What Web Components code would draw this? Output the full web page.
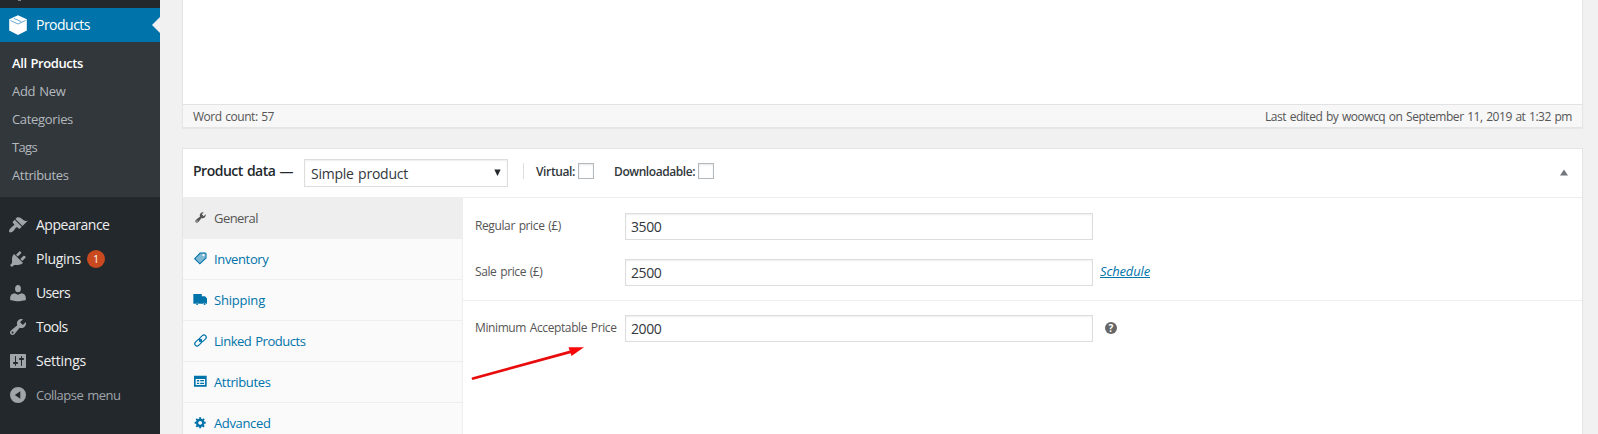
<!DOCTYPE html>
<html lang="en"><head><meta charset="utf-8"><title>Edit product</title>
<style>
html,body{margin:0;height:434px;overflow:hidden;background:#f1f1f1}
body{font-family:"Open Sans","Noto Sans",sans-serif;font-size:13px;color:#444}
</style></head><body>
<admin-page></admin-page>
<script>
const define=(name,html,after)=>customElements.define(name,class extends HTMLElement{
  connectedCallback(){
    if(this.shadowRoot)return;
    this.attachShadow({mode:'open'}).innerHTML=typeof html==='function'?html(this):html;
    if(after)after(this);
  }
});

/* A single line of text tracked to a given width. */
define('fit-text','<style>:host{display:inline-block;white-space:pre;flex:none;line-height:18px;word-spacing:1px}span{display:inline-block;text-decoration:inherit}</style><span><slot></slot></span>',el=>{
  const w=+el.getAttribute('w');
  if(!w)return;
  const s=el.shadowRoot.querySelector('span');
  const n=el.textContent.length;
  s.style.letterSpacing=((w-s.getBoundingClientRect().width)/n).toFixed(3)+'px';
});

const icons={
 product:'<path fill="#fff" d="M10 .3 18.8 4.2V15.4L10 20 1.2 15.4V4.2z"/><path fill="none" stroke="#0073aa" stroke-width=".6" d="M2.4 5.5 10 9 17.6 5.5M6 3.400 13.200 6.700"/>',
 appearance:'<path d="M14.48 11.06L7.41 3.99l1.5-1.5c.5-.56 2.3-.47 3.51.32 1.21.8 1.43 1.28 2.91 2.1 1.18.64 2.45 1.26 4.45.85zm-.71.71L6.7 4.7 4.93 6.47c-.39.39-.39 1.02 0 1.41l1.06 1.06c.39.39.39 1.03 0 1.42-.6.6-1.43 1.11-2.21 1.69-.35.26-.7.53-1.01.84C1.43 14.23.4 16.08 1.4 17.07c.99 1 2.84-.03 4.18-1.36.31-.31.58-.66.85-1.02.57-.78 1.08-1.61 1.69-2.21.39-.39 1.02-.39 1.41 0l1.06 1.06c.39.39 1.02.39 1.41 0z"/>',
 plugins:'<path d="M13.11 4.36L9.87 7.6 8 5.73l3.24-3.24c.35-.34 1.05-.2 1.56.32.52.51.66 1.21.31 1.55zm-8 1.77l.91-1.12 9.01 9.01-1.19.84c-.71.71-2.63 1.16-3.82 1.16H6.14L4.9 17.26c-.59.59-1.54.59-2.12 0-.59-.58-.59-1.53 0-2.12l1.24-1.24v-3.88c0-1.13.4-3.19 1.09-3.89zm7.26 3.97l3.24-3.24c.34-.35 1.04-.21 1.55.31.52.51.66 1.21.31 1.55l-3.24 3.25z"/>',
 users:'<path d="M10 9.250c-2.270 0-2.950-2-2.950-3.600C7.050 3.600 8.200 2 10 2s2.950 1.600 2.950 3.650C12.950 7.250 12.270 9.250 10 9.250zM6.600 10.200 10 11.700l3.400-1.500c2.600.2 4.400 2 4.400 4.400v2.400s-3.800 1.200-7.800 1.200S2.200 17 2.200 17v-2.400c0-2.400 1.800-4.200 4.400-4.400z"/>',
 tools:'<path d="M16.68 9.77c-1.34 1.34-3.3 1.67-4.95.99l-5.41 6.52c-.99.99-2.59.99-3.58 0s-.99-2.59 0-3.57l6.52-5.42c-.68-1.65-.35-3.61.99-4.95 1.28-1.28 3.12-1.62 4.72-1.06l-2.89 2.89 2.82 2.82 2.86-2.87c.53 1.58.18 3.39-1.08 4.65zM3.81 16.21c.4.39 1.04.39 1.43 0 .4-.4.4-1.04 0-1.43-.39-.4-1.03-.4-1.43 0-.39.39-.39 1.03 0 1.43z"/>',
 settings:'<path d="M18 16V4c0-.55-.45-1-1-1H3c-.55 0-1 .45-1 1v12c0 .55.45 1 1 1h14c.55 0 1-.45 1-1zM8 11h1c.55 0 1 .45 1 1s-.45 1-1 1H8v1.5c0 .28-.22.5-.5.5s-.5-.22-.5-.5V13H6c-.55 0-1-.45-1-1s.45-1 1-1h1V5.500c0-.28.22-.5.5-.5s.5.22.5.5V11zm5-2h-1c-.55 0-1-.45-1-1s.45-1 1-1h1V5.500c0-.28.22-.5.5-.5s.5.22.5.5V7h1c.55 0 1 .45 1 1s-.45 1-1 1h-1v5.500c0 .28-.22.5-.5.5s-.5-.22-.5-.5V9z"/>',
 collapse:'<path fill-rule="evenodd" d="M10 2a8 8 0 1 0 0 16 8 8 0 0 0 0-16zM12.300 6.300v7.400L6.800 10z"/>',
 inventory:'<path fill-rule="evenodd" d="M10 1h8v8L9 18.500.8 10.200zM14.600 3a1.800 1.800 0 1 0 0 3.600 1.800 1.800 0 0 0 0-3.600z" opacity=".5"/><path fill="none" stroke="currentColor" stroke-width="1.600" d="M9.500 1.600h7.500l1.500 1v6.500L9 18.200 1 10.200z"/>',
 shipping:'<path d="M-1 1.500h13V5H17l3 3.500v8h-1.500a2.300 2.300 0 0 0-4.400 0H7a2.300 2.300 0 0 0-4.400 0H-1z"/><circle cx="4.800" cy="17" r="1.600"/><circle cx="16.300" cy="17" r="1.600"/>',
 linked:'<g fill="none" stroke="currentColor" stroke-width="1.800"><rect x="7.500" y="3.300" width="12" height="7" rx="3.500" transform="rotate(-45 13.500 6.800)"/><rect x=".5" y="9.800" width="12" height="7" rx="3.500" transform="rotate(-45 6.500 13.300)"/></g><path stroke="currentColor" stroke-width="1.200" d="m7.500 12.500 5-5"/>',
 attributes:'<path fill-rule="evenodd" d="M0 1h19.500v17H0zM2.500 6v9.500H17V6z"/><path d="M4.500 7.500h3.500v2.500H4.500zM4.500 12h3.500v2H4.500zM9.500 7.500h6v2h-6zM9.500 12h6v2h-6z"/>',
 advanced:'<path d="M18 12h-2.180c-.17.7-.44 1.350-.81 1.930l1.540 1.540-2.100 2.100-1.540-1.540c-.58.36-1.230.63-1.910.79V19H8v-2.180c-.68-.16-1.330-.43-1.910-.79l-1.540 1.540-2.120-2.120 1.540-1.540c-.36-.58-.63-1.230-.79-1.910H1V9.030h2.170c.16-.7.44-1.350.8-1.940L2.430 5.550l2.100-2.100 1.540 1.540c.58-.37 1.240-.64 1.930-.81V2h3v2.180c.68.16 1.330.43 1.910.79l1.540-1.540 2.120 2.120-1.540 1.540c.36.59.64 1.240.8 1.940H18V12zm-8.500 1.500c1.660 0 3-1.340 3-3s-1.340-3-3-3-3 1.340-3 3 1.340 3 3 3z"/>',
};
define('wp-icon',el=>`<style>:host{display:block;flex:none;width:20px;height:20px}svg{display:block;width:100%;height:100%;fill:currentColor;overflow:visible}</style><svg viewBox="0 0 20 20">${icons[el.getAttribute('name')]||''}</svg>`);

define('menu-item',`<style>
:host{display:flex;height:34px;align-items:center;padding-left:8px;gap:8px;font-size:14px;color:#eee;position:relative}
:host([current]){background:#0073aa;color:#fff}
:host([current])::after{content:"";position:absolute;right:0;top:9px;border:8px solid transparent;border-left:0;border-right-color:#f1f1f1}
:host([muted]){color:#a0a5aa;font-size:13px}
</style><slot name="icon"></slot><slot></slot>`);

define('count-badge','<style>:host{display:block;width:18px;height:18px;border-radius:50%;background:#ca4a1f;color:#fff;font-size:10px;line-height:18px;text-align:center;margin-left:-2px}</style><slot></slot>');

define('sub-menu',`<style>:host{display:flex;flex-direction:column;box-sizing:border-box;height:155px;padding:7px 0 8px 12px;background:#32373c;color:#b4b9be;margin-bottom:11px}
::slotted(*){height:28px;line-height:28px!important}</style><slot></slot>`);

define('side-bar',`<style>
:host{display:block;width:160px;height:434px;background:#23282d;overflow:hidden}
.prev{height:8px;padding-left:18px}.prev i{display:block;width:3px;height:1px;background:#7d8287}
.ic{color:#a0a5aa}
</style>
<div class="prev"><i></i></div>
<menu-item current><wp-icon slot="icon" name="product"></wp-icon><fit-text w="54">Products</fit-text></menu-item>
<sub-menu><fit-text w="71" style="font-weight:600;color:#fff">All Products</fit-text><fit-text w="53.5">Add New</fit-text><fit-text w="61">Categories</fit-text><fit-text w="25">Tags</fit-text><fit-text w="56.5">Attributes</fit-text></sub-menu>
<menu-item><wp-icon class="ic" slot="icon" name="appearance"></wp-icon><fit-text w="73.5">Appearance</fit-text></menu-item>
<menu-item><wp-icon class="ic" slot="icon" name="plugins"></wp-icon><fit-text w="45">Plugins</fit-text><count-badge>1</count-badge></menu-item>
<menu-item><wp-icon class="ic" slot="icon" name="users"></wp-icon><fit-text w="34">Users</fit-text></menu-item>
<menu-item><wp-icon class="ic" slot="icon" name="tools"></wp-icon><fit-text w="31.5">Tools</fit-text></menu-item>
<menu-item><wp-icon class="ic" slot="icon" name="settings"></wp-icon><fit-text w="50">Settings</fit-text></menu-item>
<menu-item muted><wp-icon class="ic" slot="icon" name="collapse"></wp-icon><fit-text w="84.5">Collapse menu</fit-text></menu-item>`);

define('editor-box',`<style>
:host{display:flex;flex:none;flex-direction:column;box-sizing:border-box;height:128px;background:#fff;border:1px solid #e5e5e5;border-top:0;box-shadow:0 1px 1px rgba(0,0,0,.04)}
.area{flex:1}.status{box-sizing:border-box;display:flex;justify-content:space-between;height:23px;padding:3px 10px 0;background:#f7f7f7;border-top:1px solid #e2e2e2;font-size:12px;color:#555}
</style><div class="area"></div><div class="status"><fit-text w="81">Word count: 57</fit-text><fit-text w="307">Last edited by woowcq on September 11, 2019 at 1:32 pm</fit-text></div>`);

define('check-field',`<style>:host{display:flex;gap:3px;align-items:flex-start;font-size:12px;font-weight:600;color:#32373c}i{box-sizing:border-box;width:16px;height:16px;border:1px solid #b4b9be;background:#fff;box-shadow:inset 0 1px 2px rgba(0,0,0,.1)}</style><slot></slot><i></i>`);

define('panel-header',`<style>
:host{display:flex;box-sizing:border-box;height:49px;border-bottom:1px solid #eee;padding:10px 14px 0 10px;align-items:flex-start}
.t{font-size:14px;font-weight:600;color:#23282d;margin-top:3px}
.sel{box-sizing:border-box;display:flex;justify-content:space-between;width:204px;height:28px;margin-left:11px;border:1px solid #ddd;box-shadow:inset 0 1px 2px rgba(0,0,0,.07);padding:5px 6px 0 6px;font-size:14px;color:#32373c}
.sel svg{margin-top:4px;flex:none}
.sep{width:1px;height:16px;background:#ddd;margin:4px 12px 0 15px}
check-field{height:16px;margin:4px 20px 0 0}
.tog{margin:10px 0 0 auto}
</style><fit-text class="t" w="100">Product data —</fit-text>
<div class="sel"><fit-text w="97">Simple product</fit-text><svg width="7" height="7"><path fill="#23282d" d="M.3.5h6.400L3.500 7z"/></svg></div>
<div class="sep"></div><check-field><fit-text w="39">Virtual:</fit-text></check-field><check-field><fit-text w="81">Downloadable:</fit-text></check-field>
<svg class="tog" width="8" height="7"><path fill="#72777c" d="M4 .5 8 6.500H0z"/></svg>`);

define('data-tab',`<style>:host{display:flex;box-sizing:border-box;height:41px;border-bottom:1px solid #eee;padding:11px 10px 0 7px;gap:7.500px;color:#0073aa;background:#fafafa}
:host([active]){background:#eee;color:#555}
wp-icon{width:13px;height:13px;margin:1.500px 0 0 3.500px}</style><wp-icon></wp-icon><slot></slot>`,el=>{
  const i=document.createElement('wp-icon');i.setAttribute('name',el.getAttribute('icon'));
  el.shadowRoot.querySelector('wp-icon').replaceWith(i);
});

define('price-field',`<style>:host{display:flex;height:27px}
label{width:150px;flex:none;font-size:12px;line-height:18px;padding-top:4px;color:#555}
.in{box-sizing:border-box;width:468px;height:27px;border:1px solid #ddd;background:#fff;box-shadow:inset 0 1px 2px rgba(0,0,0,.07);padding:3px 5px;font-size:14px;color:#32373c}
</style><label><slot name="label"></slot></label><div class="in"><slot></slot></div><slot name="after"></slot>`);

define('red-arrow','<style>:host{position:absolute;left:8px;top:148px;width:116px;height:36px}svg{display:block}</style><svg width="116" height="36"><path stroke="#e80c0c" stroke-width="2.800" stroke-linecap="round" d="M2 32.500 103 4.800"/><path fill="#f80808" d="M113 1.200 97.500 1.200 100.500 10z"/></svg>');

define('help-tip','<style>:host{display:block;width:12px;height:12px;border-radius:50%;background:#666;color:#fff;font:700 10px/12px "Open Sans",sans-serif;text-align:center;margin:7px 0 0 12px}</style>?');

define('product-data',`<style>
:host{display:block;flex:none;background:#fff;border:1px solid #e5e5e5;box-shadow:0 1px 1px rgba(0,0,0,.04);box-sizing:border-box;height:300px}
.cols{display:flex;height:250px}
.tabs{width:279px;border-right:1px solid #eee;background:#fafafa}
.form{flex:1;position:relative}
.g{padding:15px 12px 0;display:flex;flex-direction:column;gap:19px}
.g1{height:87px;border-bottom:1px solid #eee}.g2{padding-top:14px}
.s{color:#0073aa;font-style:italic;text-decoration:underline;margin:3px 0 0 7px}
</style><panel-header></panel-header>
<div class="cols"><div class="tabs">
<data-tab active icon="tools"><fit-text w="44">General</fit-text></data-tab>
<data-tab icon="inventory"><fit-text w="54.5">Inventory</fit-text></data-tab>
<data-tab icon="shipping"><fit-text w="51">Shipping</fit-text></data-tab>
<data-tab icon="linked"><fit-text w="91.5">Linked Products</fit-text></data-tab>
<data-tab icon="attributes"><fit-text w="56.5">Attributes</fit-text></data-tab>
<data-tab icon="advanced"><fit-text w="56.5">Advanced</fit-text></data-tab>
</div><div class="form">
<div class="g g1"><price-field><fit-text slot="label" w="86">Regular price (£)</fit-text><fit-text w="30.5">3500</fit-text></price-field>
<price-field><fit-text slot="label" w="67.5">Sale price (£)</fit-text><fit-text w="30.5">2500</fit-text><fit-text slot="after" class="s" w="50">Schedule</fit-text></price-field></div>
<div class="g g2"><price-field><fit-text slot="label" w="141.5">Minimum Acceptable Price</fit-text><fit-text w="30.5">2000</fit-text><help-tip slot="after"></help-tip></price-field></div>
<red-arrow></red-arrow></div></div>`);

define('admin-page',`<style>:host{display:flex;height:434px;overflow:hidden}main{flex:1;display:flex;flex-direction:column;gap:20px;padding:0 15px 0 22px}</style>
<side-bar></side-bar><main><editor-box></editor-box><product-data></product-data></main>`);
</script></body></html>
